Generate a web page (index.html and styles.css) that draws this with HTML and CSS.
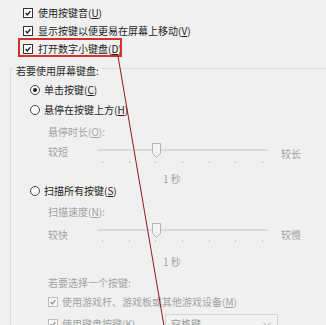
FILE: index.html
```html
<!DOCTYPE html>
<html lang="zh-CN">
<head>
    <meta charset="UTF-8">
    <meta name="viewport" content="width=device-width, initial-scale=1.0">
    <title>鼠标键设置</title>
    <link rel="stylesheet" href="styles.css">
</head>
<body>
    <div class="page">
        <div class="top-options">
            <div class="check-row">
                <span class="box"><svg viewBox="0 0 10 10"><polyline points="2,5 4.2,7.4 8,2.6"/></svg></span>
                使用按键音(<u>U</u>)
            </div>
            <div class="check-row">
                <span class="box"><svg viewBox="0 0 10 10"><polyline points="2,5 4.2,7.4 8,2.6"/></svg></span>
                显示按键以便更易在屏幕上移动(<u>V</u>)
            </div>
            <div class="check-row">
                <span class="box"><svg viewBox="0 0 10 10"><polyline points="2,5 4.2,7.4 8,2.6"/></svg></span>
                打开数字小键盘(<u>D</u>)
            </div>
        </div>

        <fieldset class="group">
            <legend>若要使用屏幕键盘:</legend>

            <div class="radio-row">
                <span class="radio on"></span>单击按键(<u>C</u>)
            </div>
            <div class="radio-row">
                <span class="radio"></span>悬停在按键上方(<u>H</u>)
            </div>

            <div class="sub-label first">悬停时长(<u>O</u>):</div>
            <div class="slider-row">
                <span class="end-label left">较短</span>
                <div class="slider">
                    <div class="track"></div>
                    <div class="ticks"><i></i><i></i><i></i><i></i><i></i><i></i><i></i></div>
                    <svg class="thumb" viewBox="0 0 9 15"><path d="M0.5 0.5 H8.5 V10.5 L4.5 14.5 L0.5 10.5 Z"/></svg>
                </div>
                <span class="end-label right">较长</span>
            </div>
            <div class="value-label v1">1 秒</div>

            <div class="radio-row short">
                <span class="radio"></span>扫描所有按键(<u>S</u>)
            </div>

            <div class="sub-label second">扫描速度(<u>N</u>):</div>
            <div class="slider-row two">
                <span class="end-label left">较快</span>
                <div class="slider">
                    <div class="track"></div>
                    <div class="ticks"><i></i><i></i><i></i><i></i><i></i><i></i><i></i></div>
                    <svg class="thumb" viewBox="0 0 9 15"><path d="M0.5 0.5 H8.5 V10.5 L4.5 14.5 L0.5 10.5 Z"/></svg>
                </div>
                <span class="end-label right">较慢</span>
            </div>
            <div class="value-label v2">1 秒</div>

            <div class="sub-label third">若要选择一个按键:</div>
            <div class="check-row dim first-dim">
                <span class="box"><svg viewBox="0 0 10 10"><polyline points="2,5 4.2,7.4 8,2.6"/></svg></span>
                使用游戏杆、游戏板或其他游戏设备(<u>M</u>)
            </div>
            <div class="check-row dim key-row">
                <span class="box"><svg viewBox="0 0 10 10"><polyline points="2,5 4.2,7.4 8,2.6"/></svg></span>
                <span class="key-label">使用键盘按键(<u>K</u>)</span>
                <div class="dropdown">
                    空格键
                    <svg viewBox="0 0 8 5"><polyline points="0.5,0.5 4,4 7.5,0.5"/></svg>
                </div>
            </div>
        </fieldset>

        <!-- annotation -->
        <div class="mark"></div>
        <svg class="pointer" viewBox="0 0 326 325"><line x1="118" y1="56" x2="164" y2="326"/></svg>
    </div>
</body>
</html>
```

FILE: styles.css
```css
body {
    margin: 0;
    background: #f0f0f0;
    font-family: "Noto Sans CJK SC", "Microsoft YaHei", sans-serif;
    font-size: 10px;
    color: #1e1e1e;
    overflow: hidden;
}

u {
    text-decoration-thickness: 1px;
    text-underline-offset: 1px;
}

.page {
    position: relative;
    width: 326px;
    height: 325px;
    overflow: hidden;
}

.top-options {
    padding-top: 4px;
}

.check-row {
    display: flex;
    align-items: center;
    height: 18px;
    line-height: 12px;
    padding-left: 23px;
    white-space: nowrap;
}

.box {
    width: 10px;
    height: 10px;
    box-sizing: border-box;
    border: 1px solid #333;
    background: #fff;
    margin-right: 5px;
    display: flex;
}

.box svg {
    width: 8px;
    height: 8px;
    fill: none;
    stroke: #222;
    stroke-width: 1.8;
}

.group {
    margin: 0 0 0 10px;
    padding: 2px 0 0 0;
    border: none;
    border-top: 1px solid #dcdcdc;
    border-left: 1px solid #dcdcdc;
    min-width: 0;
}

.group legend {
    padding: 6px 3px 0 3px;
    margin-left: 2px;
    line-height: 14px;
    color: #2a2a2a;
}

.radio-row {
    display: flex;
    align-items: center;
    height: 20px;
    line-height: 12px;
    padding-left: 19px;
}

.radio-row.short {
    height: 11px;
}

.radio {
    width: 10px;
    height: 10px;
    box-sizing: border-box;
    border: 1px solid #444;
    border-radius: 50%;
    background: #fff;
    margin-right: 4px;
    display: flex;
    align-items: center;
    justify-content: center;
}

.radio.on::after {
    content: "";
    width: 4px;
    height: 4px;
    border-radius: 50%;
    background: #222;
}

.sub-label,
.value-label,
.end-label {
    color: #a3a3a3;
    line-height: 12px;
}

.sub-label {
    padding-left: 37px;
}

.sub-label.first {
    padding-top: 6px;
    height: 16px;
}

.sub-label.second {
    padding-top: 10px;
}

.sub-label.third {
    padding-top: 9px;
}

.slider-row {
    display: flex;
    align-items: flex-start;
    height: 22px;
    padding-left: 37px;
}

.slider-row.two {
    margin-top: 4px;
}

.end-label.left {
    width: 49px;
    margin-top: 4px;
}

.slider-row.two .end-label {
    margin-top: 7px;
}

.end-label.right {
    margin-left: 13px;
    margin-top: 6px;
}

.slider {
    position: relative;
    width: 171px;
}

.track {
    margin-top: 7px;
    height: 2px;
    background: #dadada;
    border-radius: 1px;
}

.ticks {
    display: flex;
    justify-content: space-between;
    padding: 0 5px;
    margin-top: 10px;
}

.slider-row.two .ticks {
    margin-top: 9px;
}

.ticks i {
    width: 1px;
    height: 2px;
    background: #c8c8c8;
}

.thumb {
    position: absolute;
    left: 55px;
    top: 1px;
    width: 9px;
    height: 15px;
    fill: #f4f4f4;
    stroke: #b5b5b5;
    stroke-width: 1;
}

.value-label {
    padding-left: 152px;
}

.value-label.v1 {
    padding-top: 9px;
}

.value-label.v2 {
    padding-top: 12px;
}

.check-row.dim {
    color: #a3a3a3;
    padding-left: 37px;
}

.check-row.dim .box {
    border-color: #bdbdbd;
    background: #f7f7f7;
    margin-right: 4px;
}

.check-row.dim .box svg {
    stroke: #9a9a9a;
}

.check-row.first-dim {
    margin-top: 7px;
    height: 12px;
}

.check-row.key-row {
    margin-top: 6px;
    height: 20px;
}

.key-label {
    width: 103px;
}

.dropdown {
    width: 113px;
    height: 20px;
    box-sizing: border-box;
    border: 1px solid #d6d6d6;
    background: #f2f2f2;
    display: flex;
    align-items: center;
    justify-content: space-between;
    padding: 0 6px 0 5px;
    color: #9c9c9c;
}

.dropdown svg {
    width: 8px;
    height: 5px;
    fill: none;
    stroke: #b0b0b0;
    stroke-width: 1;
}

.mark {
    position: absolute;
    left: 18px;
    top: 38px;
    width: 104px;
    height: 19px;
    box-sizing: border-box;
    border: 2px solid #d4302c;
}

.pointer {
    position: absolute;
    left: 0;
    top: 0;
    width: 326px;
    height: 325px;
    pointer-events: none;
}

.pointer line {
    stroke: #8e1b1b;
    stroke-width: 1;
}
```
